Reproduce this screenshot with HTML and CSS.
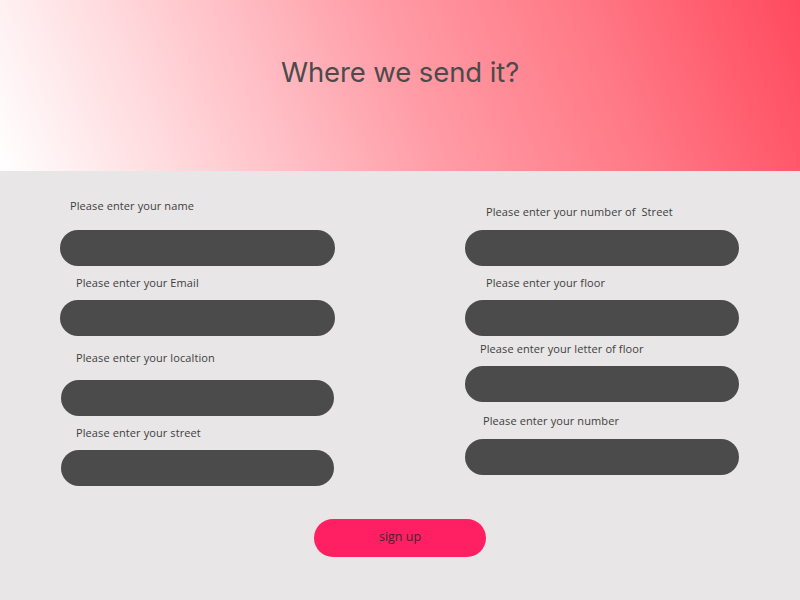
FILE: index.html
```html
<!DOCTYPE html>
<html lang="en">
<head>
<meta charset="utf-8">
<title>Where we send it?</title>
<link rel="stylesheet" href="styles.css">
</head>
<body>
<header class="hero">
  <h1 class="hero-title">Where we send it?</h1>
</header>
<main class="form">
  <div class="columns">
    <div class="col col-left">
      <div class="field f-l1"><label class="label">Please enter your name</label><div class="input"></div></div>
      <div class="field f-l2"><label class="label">Please enter your Email</label><div class="input"></div></div>
      <div class="field f-l3"><label class="label">Please enter your localtion</label><div class="input"></div></div>
      <div class="field f-l4"><label class="label">Please enter your street</label><div class="input"></div></div>
    </div>
    <div class="col col-right">
      <div class="field f-r1"><label class="label">Please enter your number of&nbsp; Street</label><div class="input"></div></div>
      <div class="field f-r2"><label class="label">Please enter your floor</label><div class="input"></div></div>
      <div class="field f-r3"><label class="label">Please enter your letter of floor</label><div class="input"></div></div>
      <div class="field f-r4"><label class="label">Please enter your number</label><div class="input"></div></div>
    </div>
  </div>
  <div class="actions"><button class="btn" type="button">sign up</button></div>
</main>
</body>
</html>
```
FILE: styles.css
```css
* { box-sizing: border-box; }
html, body { margin: 0; padding: 0; }
body {
  width: 800px;
  height: 600px;
  background: #e8e6e7;
  font-family: "Open Sans", "Liberation Sans", sans-serif;
  overflow: hidden;
}
.hero {
  height: 171px;
  display: flex;
  align-items: center;
  justify-content: center;
  background: linear-gradient(68deg, #ffffff 0%, #ffd6da 22%, #ff9ea8 50%, #ff7885 75%, #ff4a5e 100%);
}
.hero-title {
  margin: 0 0 28px 0;
  font-family: "Inter", "Open Sans", sans-serif;
  font-weight: 400;
  font-size: 27.5px;
  letter-spacing: -0.1px;
  color: #4b4b4b;
}
.columns {
  display: flex;
  padding-left: 60px;
  gap: 130px;
}
.col { display: flex; flex-direction: column; width: 275px; }
.col-right { width: 274px; }
.field { display: flex; flex-direction: column; }
.label {
  display: block;
  height: 14px;
  line-height: 14px;
  font-size: 11px;
  letter-spacing: 0.1px;
  color: #3e3e3e;
  white-space: nowrap;
  padding-left: 16px;
}
.input {
  height: 36px;
  border-radius: 18px;
  background: #4b4b4b;
}
.f-l1 { margin-top: 28px; } .f-l1 .label { margin-bottom: 17px; padding-left: 10px; }
.f-l2 { margin-top: 10px; } .f-l2 .label { margin-bottom: 10px; }
.f-l3 { margin-top: 15px; } .f-l3 .label { margin-bottom: 15px; }
.f-l4 { margin-top: 10px; } .f-l4 .label { margin-bottom: 10px; }
.f-l3 .input, .f-l4 .input { margin-left: 1px; margin-right: 1px; }

.f-r1 { margin-top: 34px; } .f-r1 .label { margin-bottom: 11px; padding-left: 21px; }
.f-r2 { margin-top: 10px; } .f-r2 .label { margin-bottom: 10px; padding-left: 21px; }
.f-r3 { margin-top: 6px; } .f-r3 .label { margin-bottom: 10px; padding-left: 15px; }
.f-r4 { margin-top: 12px; } .f-r4 .label { margin-bottom: 11px; padding-left: 18px; }

.actions {
  display: flex;
  justify-content: center;
  margin-top: 33px;
}
.btn {
  width: 172px;
  height: 38px;
  border: none;
  border-radius: 19px;
  background: #ff1f62;
  color: #4a2236;
  font-family: "Open Sans", "Liberation Sans", sans-serif;
  font-size: 12.5px;
  line-height: 36px;
  padding: 0 0 2px 0;
  cursor: pointer;
}
```
